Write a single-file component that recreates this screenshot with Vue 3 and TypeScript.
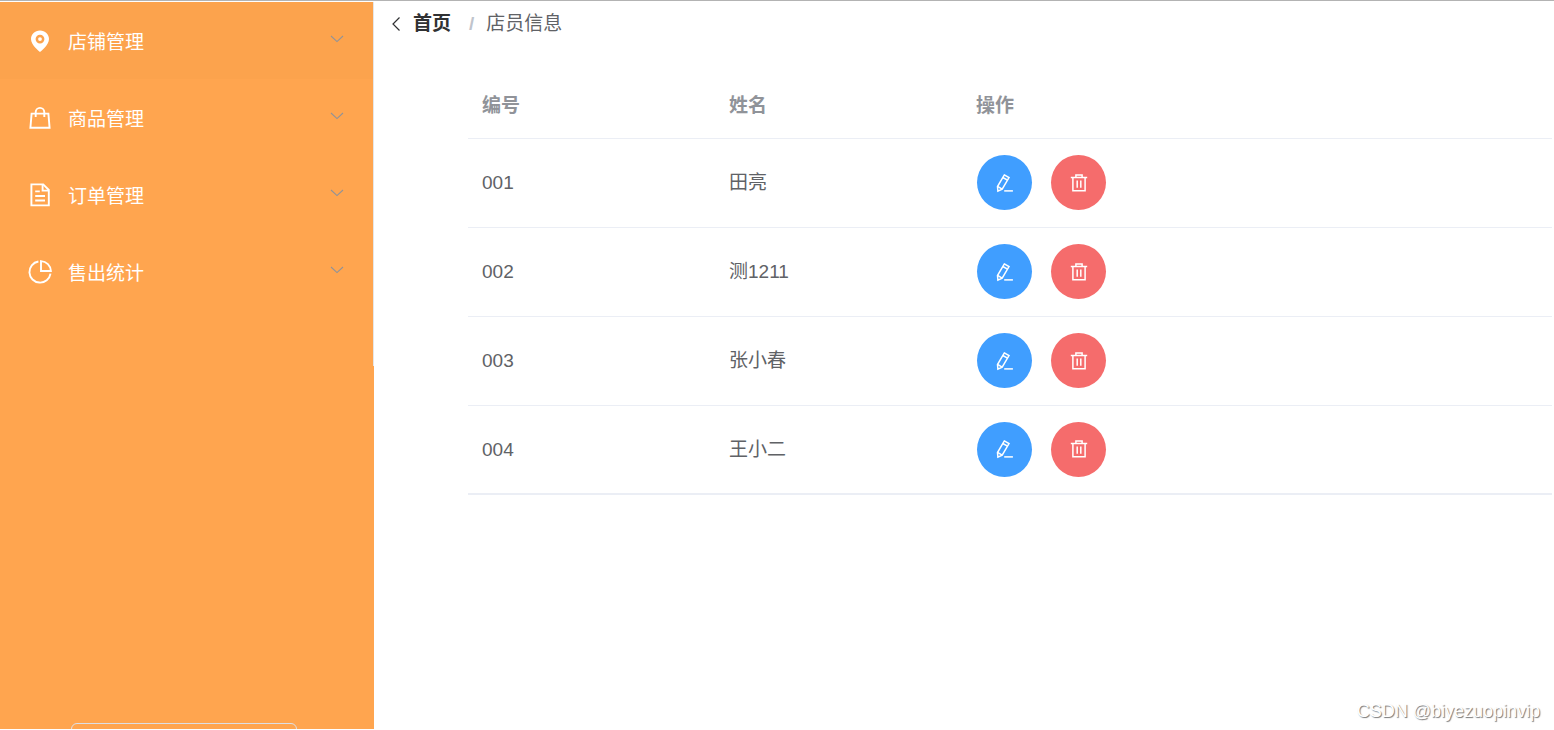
<script setup lang="ts">
interface MenuEntry {
  icon: 'location' | 'bag' | 'document' | 'chart'
  label: string
}

interface Clerk {
  id: string
  name: string
}

const menu: MenuEntry[] = [
  { icon: 'location', label: '店铺管理' },
  { icon: 'bag', label: '商品管理' },
  { icon: 'document', label: '订单管理' },
  { icon: 'chart', label: '售出统计' },
]

const clerks: Clerk[] = [
  { id: '001', name: '田亮' },
  { id: '002', name: '测1211' },
  { id: '003', name: '张小春' },
  { id: '004', name: '王小二' },
]
</script>

<template>
  <div class="app">
    <aside class="sidebar">
      <nav class="menu">
        <button
          v-for="(entry, index) in menu"
          :key="entry.label"
          type="button"
          class="menu-item"
          :class="{ active: index === 0 }"
        >
          <svg class="menu-icon" viewBox="0 0 24 24" aria-hidden="true">
            <path
              v-if="entry.icon === 'location'"
              fill="currentColor"
              fill-rule="evenodd"
              d="M12 1.500C6.900 1.500 3 5.200 3 10c0 3.200 2 6.200 4.400 8.800 1.700 1.900 3.400 3.400 4.600 4.200 1.200-.8 2.900-2.300 4.600-4.200C19 16.200 21 13.200 21 10c0-4.800-3.900-8.500-9-8.500zM12 5.700a4.400 4.400 0 1 1 0 8.800 4.400 4.400 0 0 1 0-8.800zM12 8.200a1.900 1.900 0 1 0 0 3.800 1.900 1.900 0 0 0 0-3.800z"
            />
            <g v-else-if="entry.icon === 'bag'" fill="none" stroke="currentColor" stroke-width="1.900">
              <path d="M3.600 7.600h16.800l1.200 14.200H2.400z" />
              <path d="M7.700 11V6.200a4.300 4.300 0 0 1 8.600 0V11" />
            </g>
            <g v-else-if="entry.icon === 'document'" fill="none" stroke="currentColor" stroke-width="1.900">
              <path d="M3.400 1.400h11.800l5.600 5.600v15.400H3.400z" />
              <path d="M14.600 1.600v6h6" />
              <path d="M7.200 8.400h4.600M7.200 13h9.800M7.200 17.500h9.800" />
            </g>
            <g v-else fill="none" stroke="currentColor" stroke-width="1.900">
              <path d="M10.400 1.500A10.600 10.600 0 1 0 22.500 13.600" />
              <path d="M13 1.100v9.900h9.900A10.200 10.200 0 0 0 13 1.100z" />
            </g>
          </svg>
          <span class="menu-label">{{ entry.label }}</span>
          <svg class="chevron" viewBox="0 0 14 8" aria-hidden="true">
            <path d="M1 1l6 5.600L13 1" fill="none" stroke="currentColor" stroke-width="1.100" />
          </svg>
        </button>
      </nav>
      <div class="sidebar-foot">
        <button type="button" class="foot-button" aria-label="退出"></button>
      </div>
    </aside>

    <main class="content">
      <nav class="breadcrumb">
        <svg class="back" viewBox="0 0 10 16" aria-hidden="true">
          <path d="M8.500 1.500L2 8l6.500 6.500" fill="none" stroke="currentColor" stroke-width="1.200" />
        </svg>
        <a href="#" class="home">首页</a>
        <span class="separator">/</span>
        <span>店员信息</span>
      </nav>

      <section class="list">
        <table>
          <colgroup>
            <col class="col-field" />
            <col class="col-field" />
            <col />
          </colgroup>
          <thead>
            <tr>
              <th scope="col">编号</th>
              <th scope="col">姓名</th>
              <th scope="col">操作</th>
            </tr>
          </thead>
          <tbody>
            <tr v-for="clerk in clerks" :key="clerk.id">
              <td>{{ clerk.id }}</td>
              <td>{{ clerk.name }}</td>
              <td class="action-cell">
                <div class="actions">
                  <button type="button" class="round edit" aria-label="编辑">
                    <svg viewBox="0 0 20 20" aria-hidden="true">
                      <g fill="none" stroke="currentColor" stroke-width="1.500">
                        <path d="M9.300 1.900l4.700 2.700-6.800 11.600-4.300 1.900-.4-4.600z" />
                        <path d="M7.800 4.500l4.700 2.700M2.500 13.400l4.700 2.800" />
                        <path d="M9.200 17.900h8.700" />
                      </g>
                    </svg>
                  </button>
                  <button type="button" class="round remove" aria-label="删除">
                    <svg viewBox="0 0 20 20" aria-hidden="true">
                      <g fill="none" stroke="currentColor" stroke-width="1.500">
                        <path d="M1.800 4.500h16.400" />
                        <path d="M3.900 4.500v13.200h12.200V4.500" />
                        <path d="M6.900 4.300V2h6.200v2.300" />
                        <path d="M8.200 7.500v7.200M11.800 7.500v7.200" />
                      </g>
                    </svg>
                  </button>
                </div>
              </td>
            </tr>
          </tbody>
        </table>
      </section>
    </main>

    <div class="watermark">CSDN @biyezuopinvip</div>
  </div>
</template>

<style>
body {
  margin: 0;
  background: #fff;
}
</style>

<style scoped>
.app {
  position: relative;
  box-sizing: border-box;
  display: flex;
  height: 100vh;
  padding: 1px 0;
  border-top: 1px solid #b3b3b3;
  overflow: hidden;
  color: #606266;
  font-family: "Liberation Sans", "Noto Sans CJK SC", sans-serif;
  font-size: 19px;
}

button {
  margin: 0;
  padding: 0;
  border: 0;
  background: none;
  font: inherit;
  cursor: pointer;
}

.sidebar {
  flex: 0 0 374px;
  display: flex;
  flex-direction: column;
  justify-content: space-between;
  background: #ffa54f;
}

.menu {
  box-sizing: border-box;
  height: 50%;
  min-height: 309px;
  border-right: 1px solid #e6e6e6;
}

.menu-item {
  display: flex;
  align-items: center;
  width: 100%;
  height: 77px;
  padding: 0 29px 0 28px;
  color: #fff;
  text-align: left;
}

.menu-item.active {
  background: #fca34d;
}

.menu-icon {
  width: 24px;
  height: 24px;
  margin-right: 16px;
}

.menu-label {
  flex: 1;
  padding-top: 4px;
  line-height: 28px;
}

.chevron {
  width: 14px;
  height: 8px;
  margin-bottom: 4px;
  color: #909399;
}

.sidebar-foot {
  height: 6px;
  padding: 0 77px 0 71px;
  overflow: hidden;
}

.foot-button {
  display: block;
  box-sizing: border-box;
  width: 100%;
  height: 55px;
  border: 1px solid #dcdfe6;
  border-radius: 6px;
}

.content {
  flex: 1;
  min-width: 0;
  padding: 8px 2px 0 17px;
}

.breadcrumb {
  display: flex;
  align-items: center;
  height: 28px;
  line-height: 28px;
}

.back {
  width: 10px;
  height: 16px;
  margin-right: 12px;
  color: #303133;
}

.home {
  color: #303133;
  font-weight: 700;
  text-decoration: none;
}

.separator {
  margin: 0 12px 0 18px;
  color: #c0c4cc;
  font-weight: 700;
}

.list {
  margin: 38px 0 0 77px;
}

table {
  width: 100%;
  border-collapse: separate;
  border-spacing: 0;
  border-bottom: 1px solid #ebeef5;
  table-layout: fixed;
}

.col-field {
  width: 247px;
}

th,
td {
  box-sizing: border-box;
  padding: 0 14px;
  border-bottom: 1px solid #ebeef5;
  line-height: 24px;
  text-align: left;
  vertical-align: middle;
}

th {
  height: 63px;
  padding-bottom: 2px;
  color: #909399;
  font-weight: 700;
}

td {
  height: 89px;
}

tbody tr:last-child td {
  height: 88px;
}

.action-cell {
  padding: 0 15px 1px;
}

.actions {
  display: flex;
  gap: 19px;
}

.round {
  display: flex;
  align-items: center;
  justify-content: center;
  width: 55px;
  height: 55px;
  border-radius: 50%;
  color: #fff;
}

.round svg {
  width: 20px;
  height: 20px;
}

.edit {
  background: #409eff;
}

.remove {
  background: #f56c6c;
}

.watermark {
  position: absolute;
  right: 14px;
  bottom: 8px;
  color: #fff;
  font-family: "Liberation Sans", Arial, sans-serif;
  font-size: 18px;
  line-height: 22px;
  text-shadow: 1px 1px 1px #777;
}
</style>
